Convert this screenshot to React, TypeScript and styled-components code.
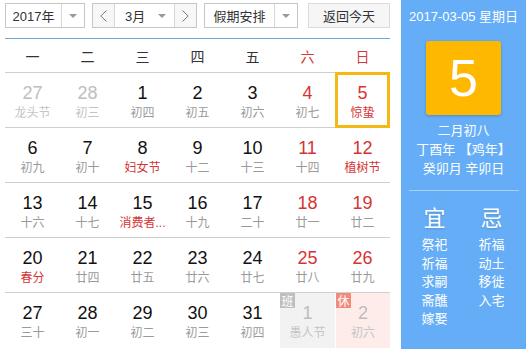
import styled, { createGlobalStyle } from 'styled-components';

const GlobalStyle = createGlobalStyle`
  html, body {
    margin: 0;
    padding: 0;
    background: #fff;
    overflow: hidden;
  }
  * { box-sizing: border-box; }
`;

type Kind = 'normal' | 'other';
interface Day {
  d: number;
  l: string;
  kind?: Kind;
  fest?: boolean;
  selected?: boolean;
  tag?: '班' | '休';
}

const weeks: Day[][] = [
  [
    { d: 27, l: '龙头节', kind: 'other' },
    { d: 28, l: '初三', kind: 'other' },
    { d: 1, l: '初四' },
    { d: 2, l: '初五' },
    { d: 3, l: '初六' },
    { d: 4, l: '初七' },
    { d: 5, l: '惊蛰', fest: true, selected: true },
  ],
  [
    { d: 6, l: '初九' },
    { d: 7, l: '初十' },
    { d: 8, l: '妇女节', fest: true },
    { d: 9, l: '十二' },
    { d: 10, l: '十三' },
    { d: 11, l: '十四' },
    { d: 12, l: '植树节', fest: true },
  ],
  [
    { d: 13, l: '十六' },
    { d: 14, l: '十七' },
    { d: 15, l: '消费者...', fest: true },
    { d: 16, l: '十九' },
    { d: 17, l: '二十' },
    { d: 18, l: '廿一' },
    { d: 19, l: '廿二' },
  ],
  [
    { d: 20, l: '春分', fest: true },
    { d: 21, l: '廿四' },
    { d: 22, l: '廿五' },
    { d: 23, l: '廿六' },
    { d: 24, l: '廿七' },
    { d: 25, l: '廿八' },
    { d: 26, l: '廿九' },
  ],
  [
    { d: 27, l: '三十' },
    { d: 28, l: '初一' },
    { d: 29, l: '初二' },
    { d: 30, l: '初三' },
    { d: 31, l: '初四' },
    { d: 1, l: '愚人节', kind: 'other', tag: '班' },
    { d: 2, l: '初六', kind: 'other', tag: '休' },
  ],
];

const weekdays = ['一', '二', '三', '四', '五', '六', '日'];
const good = ['祭祀', '祈福', '求嗣', '斋醮', '嫁娶'];
const bad = ['祈福', '动土', '移徙', '入宅'];

function Chevron({ left }: { left?: boolean }) {
  return (
    <svg width="7" height="12" viewBox="0 0 7 12">
      <polyline
        points={left ? '6.5,0.5 0.8,6 6.5,11.5' : '0.5,0.5 6.2,6 0.5,11.5'}
        fill="none"
        stroke="#777"
        strokeWidth="1"
      />
    </svg>
  );
}

function App() {
  return (
    <>
      <GlobalStyle />
      <Page>
        <Main>
          <Toolbar>
            <Select $w={80}>
              <SelectText>2017年</SelectText>
              <ArrowBox $divider>
                <Caret />
              </ArrowBox>
            </Select>
            <Select $w={105}>
              <NavBtn>
                <Chevron left />
              </NavBtn>
              <MonthText>
                <span>3月</span>
                <Caret />
              </MonthText>
              <NavBtn $right>
                <Chevron />
              </NavBtn>
            </Select>
            <Select $w={94}>
              <SelectText>假期安排</SelectText>
              <ArrowBox $divider>
                <Caret />
              </ArrowBox>
            </Select>
            <TodayBtn>返回今天</TodayBtn>
          </Toolbar>

          <Calendar>
            <HeadRow>
              {weekdays.map((w, i) => (
                <HeadCell key={w} $red={i >= 5}>
                  {w}
                </HeadCell>
              ))}
            </HeadRow>
            {weeks.map((week, wi) => (
              <WeekRow key={wi} $last={wi === weeks.length - 1}>
                {week.map((day, i) => (
                  <Cell key={i} $selected={day.selected} $tag={day.tag}>
                    {day.tag && <Tag $kind={day.tag}>{day.tag}</Tag>}
                    <Num $other={day.kind === 'other'} $red={i >= 5}>
                      {day.d}
                    </Num>
                    <Lunar $other={day.kind === 'other'} $red={day.fest}>
                      {day.l}
                    </Lunar>
                  </Cell>
                ))}
              </WeekRow>
            ))}
          </Calendar>
        </Main>

        <Side>
          <DateLine>2017-03-05 星期日</DateLine>
          <BigDay>5</BigDay>
          <LunarInfo>
            <div>二月初八</div>
            <div>丁酉年 【鸡年】</div>
            <div>癸卯月 辛卯日</div>
          </LunarInfo>
          <Divider />
          <Almanac>
            <AlmanacCol>
              <AlmanacHead>宜</AlmanacHead>
              {good.map((g) => (
                <AlmanacItem key={g}>{g}</AlmanacItem>
              ))}
            </AlmanacCol>
            <AlmanacCol>
              <AlmanacHead>忌</AlmanacHead>
              {bad.map((g) => (
                <AlmanacItem key={g}>{g}</AlmanacItem>
              ))}
            </AlmanacCol>
          </Almanac>
        </Side>
      </Page>
    </>
  );
}

const Page = styled.div`
  display: flex;
  width: 526px;
  height: 349px;
  font-family: "Liberation Sans", "Noto Sans CJK SC", sans-serif;
  overflow: hidden;
`;

const Main = styled.div`
  width: 401px;
  flex-shrink: 0;
  padding: 3px 11px 0 5px;
`;

const Toolbar = styled.div`
  display: flex;
  height: 25px;
  gap: 7px;
`;

const Select = styled.div<{ $w: number }>`
  display: flex;
  width: ${(p) => p.$w}px;
  height: 25px;
  border: 1px solid #c6c6c6;
  background: #fff;
  color: #333;
  font-size: 13px;
`;

const SelectText = styled.div`
  flex: 1;
  display: flex;
  align-items: center;
  justify-content: center;
`;

const ArrowBox = styled.div<{ $divider?: boolean }>`
  width: 23px;
  display: flex;
  align-items: center;
  justify-content: center;
  border-left: ${(p) => (p.$divider ? '1px solid #d8d8d8' : 'none')};
`;

const Caret = styled.span`
  width: 0;
  height: 0;
  border-left: 4px solid transparent;
  border-right: 4px solid transparent;
  border-top: 4px solid #999;
`;

const NavBtn = styled.div<{ $right?: boolean }>`
  width: 22px;
  display: flex;
  align-items: center;
  justify-content: center;
  background: #f7f7f7;
  border-left: ${(p) => (p.$right ? '1px solid #d8d8d8' : 'none')};
  border-right: ${(p) => (p.$right ? 'none' : '1px solid #d8d8d8')};
`;

const MonthText = styled.div`
  flex: 1;
  display: flex;
  align-items: center;
  justify-content: space-between;
  padding: 0 8px 0 10px;
`;

const TodayBtn = styled.div`
  margin-left: 3px;
  width: 82px;
  height: 25px;
  display: flex;
  align-items: center;
  justify-content: center;
  background: #f6f6f6;
  border: 1px solid #dcdcdc;
  color: #333;
  font-size: 13px;
`;

const Calendar = styled.div`
  margin-top: 10px;
  border-top: 1px solid #6ea6d8;
`;

const HeadRow = styled.div`
  display: grid;
  grid-template-columns: repeat(7, 55px);
  height: 34px;
  border-bottom: 1px solid #cfcfcf;
`;

const HeadCell = styled.div<{ $red?: boolean }>`
  display: flex;
  align-items: center;
  justify-content: center;
  font-size: 14px;
  color: ${(p) => (p.$red ? '#d33a3a' : '#333')};
`;

const WeekRow = styled.div<{ $last?: boolean }>`
  display: grid;
  grid-template-columns: repeat(7, 55px);
  height: 55px;
  border-bottom: ${(p) => (p.$last ? 'none' : '1px solid #cfcfcf')};
`;

const Cell = styled.div<{ $selected?: boolean; $tag?: string }>`
  position: relative;
  display: flex;
  flex-direction: column;
  align-items: center;
  background: ${(p) =>
    p.$tag === '班' ? '#f2f2f2' : p.$tag === '休' ? '#fdecea' : 'transparent'};
  border-left: ${(p) => (p.$tag === '休' ? '1px solid #fff' : 'none')};
  box-shadow: ${(p) => (p.$selected ? 'inset 0 0 0 3px #f5b916' : 'none')};
  margin-top: ${(p) => (p.$selected ? '-1px' : '0')};
  padding-top: ${(p) => (p.$selected ? '10px' : '9px')};
  height: ${(p) => (p.$selected ? '56px' : 'auto')};
`;

const Tag = styled.span<{ $kind: string }>`
  position: absolute;
  top: 0;
  left: 0;
  width: 15px;
  height: 15px;
  display: flex;
  align-items: center;
  justify-content: center;
  font-size: 12px;
  color: #fff;
  background: ${(p) => (p.$kind === '班' ? '#bfbfbf' : '#f28b7e')};
`;

const Num = styled.div<{ $other?: boolean; $red?: boolean }>`
  font-size: 18px;
  line-height: 23px;
  color: ${(p) => (p.$other ? '#bdbdbd' : p.$red ? '#d63434' : '#111')};
`;

const Lunar = styled.div<{ $other?: boolean; $red?: boolean }>`
  font-size: 12px;
  line-height: 16px;
  white-space: nowrap;
  color: ${(p) => (p.$red ? '#d63434' : p.$other ? '#c4c4c4' : '#9a9a9a')};
`;

const Side = styled.div`
  flex: 1;
  background: #65adf6;
  color: #fff;
  display: flex;
  flex-direction: column;
  align-items: center;
  padding-top: 9px;
`;

const DateLine = styled.div`
  font-size: 13px;
  line-height: 16px;
`;

const BigDay = styled.div`
  margin-top: 16px;
  width: 75px;
  height: 74px;
  border-radius: 3px;
  background: #ffb800;
  box-shadow: 0 1px 3px rgba(0, 0, 0, 0.2);
  display: flex;
  align-items: center;
  justify-content: center;
  font-size: 52px;
`;

const LunarInfo = styled.div`
  margin-top: 6px;
  font-size: 13px;
  line-height: 19px;
  text-align: center;
`;

const Divider = styled.div`
  margin-top: 12px;
  width: 110px;
  height: 1px;
  background: #a7d0fa;
`;

const Almanac = styled.div`
  margin-top: 15px;
  display: grid;
  grid-template-columns: 55px 55px;
  gap: 2px;
  margin-right: 1px;
`;

const AlmanacCol = styled.div`
  display: flex;
  flex-direction: column;
  align-items: center;
`;

const AlmanacHead = styled.div`
  font-size: 22px;
  line-height: 26px;
  margin-bottom: 4px;
  text-shadow: 0 1px 2px rgba(0, 0, 0, 0.15);
`;

const AlmanacItem = styled.div`
  font-size: 13px;
  line-height: 18.5px;
`;

export default App;
